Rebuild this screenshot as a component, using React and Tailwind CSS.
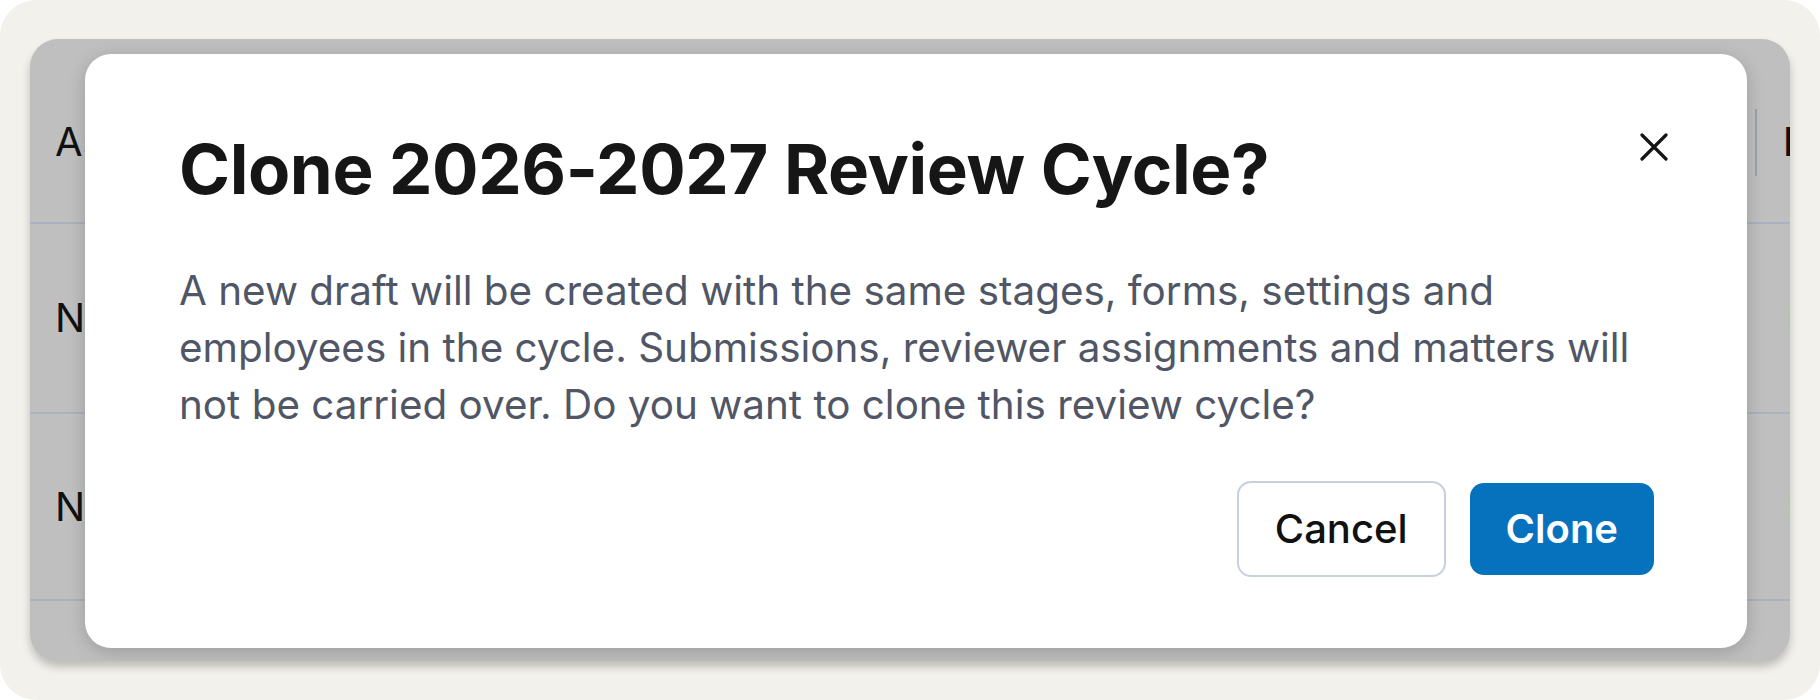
import React from 'react';

const font = { fontFamily: 'Inter, "Noto Sans", sans-serif' };

const CloseIcon = () => (
  <svg width="28" height="28" viewBox="0 0 28 28" fill="none">
    <path d="M2 2L26 26M26 2L2 26" stroke="#141414" strokeWidth="3.2" strokeLinecap="round" />
  </svg>
);

const TableRow = ({ name, height }) => (
  <div className={`flex items-center border-b-2 border-[#aab1c0] pl-[25px] ${height}`}>
    <span className="w-[1730px] shrink-0 text-[40px] text-[#111] whitespace-nowrap">{name}</span>
    <span className="w-[46px] h-[46px] rounded-full bg-[#b6c4b6] shrink-0" />
  </div>
);

const App = () => {
  return (
    <div className="w-[1820px] h-[700px] bg-white" style={font}>
      <div className="w-full h-full rounded-[36px] bg-[#f2f1ec] pt-[39px] pl-[30px]">
        <div className="relative w-[1760px] h-[622px] rounded-[28px] bg-[#bfbfbf] overflow-hidden shadow-[0_6px_8px_rgba(0,0,0,0.22)]">
          {/* table behind the overlay */}
          <div className="flex flex-col">
            <div className="flex items-center h-[185px] pt-[23px] border-b-2 border-[#aab1c0] pl-[25px]">
              <span className="w-[1700px] shrink-0 text-[40px] text-[#111] whitespace-nowrap">Assignee</span>
              <span className="w-[2px] h-[67px] bg-[#98a1b3] shrink-0" />
              <span className="ml-[26px] shrink-0 text-[40px] font-medium text-[#111] whitespace-nowrap">Information</span>
            </div>
            <TableRow name="Nadia Kowalski" height="h-[190px]" />
            <TableRow name="Nathan Brooks" height="h-[187px]" />
            <TableRow name="Olivia Hart" height="h-[187px]" />
          </div>

          {/* dialog */}
          <div className="absolute left-[55px] top-[15px] w-[1662px] h-[594px] rounded-[26px] bg-white shadow-[0_4px_18px_rgba(0,0,0,0.18)] pt-[75px] pl-[94px] pr-[93px]">
            <button className="absolute left-[1555px] top-[79px] flex items-center justify-center">
              <CloseIcon />
            </button>
            <h2 className="text-[69px] leading-[80px] font-bold text-[#161616] tracking-[-0.4px]">
              Clone 2026-2027 Review Cycle?
            </h2>
            <p className="mt-[53px] text-[40.4px] leading-[57px] text-[#505665]">
              A new draft will be created with the same stages, forms, settings and employees in the cycle. Submissions, reviewer assignments and matters will not be carried over. Do you want to clone this review cycle?
            </p>
            <div className="mt-[48px] flex items-center justify-end gap-[24px]">
              <button className="h-[96px] px-[36px] rounded-[14px] border-2 border-[#c8d0e0] bg-white text-[40px] font-medium text-[#111]">
                Cancel
              </button>
              <button className="h-[92px] px-[36px] rounded-[14px] bg-[#0671bd] text-[40px] font-semibold text-white">
                Clone
              </button>
            </div>
          </div>
        </div>
      </div>
    </div>
  );
};

export default App;
